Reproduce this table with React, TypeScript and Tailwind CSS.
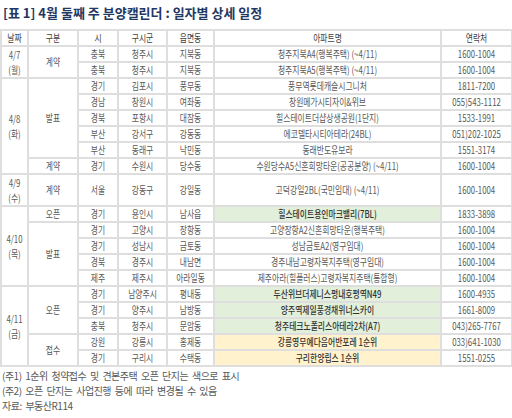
import React from "react";

type Row = {
  date?: [string, string, number];
  cat?: [string, number];
  si: string;
  gu: string;
  dong: string;
  apt: string;
  tel: string;
  hl?: "g" | "y";
  tall?: boolean;
};

const rows: Row[] = [
  { date: ["4/7", "(월)", 2], cat: ["계약", 2], si: "충북", gu: "청주시", dong: "지북동", apt: "청주지북A4(행복주택) (~4/11)", tel: "1600-1004" },
  { si: "충북", gu: "청주시", dong: "지북동", apt: "청주지북A5(행복주택) (~4/11)", tel: "1600-1004" },
  { date: ["4/8", "(화)", 6], cat: ["발표", 5], si: "경기", gu: "김포시", dong: "풍무동", apt: "풍무역롯데캐슬시그니처", tel: "1811-7200" },
  { si: "경남", gu: "창원시", dong: "여좌동", apt: "창원메가시티자이&위브", tel: "055)543-1112" },
  { si: "경북", gu: "포항시", dong: "대잠동", apt: "힐스테이트더샵상생공원(1단지)", tel: "1533-1991" },
  { si: "부산", gu: "강서구", dong: "강동동", apt: "에코델타시티아테라(24BL)", tel: "051)202-1025" },
  { si: "부산", gu: "동래구", dong: "낙민동", apt: "동래반도유보라", tel: "1551-3174" },
  { cat: ["계약", 1], si: "경기", gu: "수원시", dong: "당수동", apt: "수원당수A5신혼희망타운(공공분양) (~4/11)", tel: "1600-1004" },
  { date: ["4/9", "(수)", 1], cat: ["계약", 1], si: "서울", gu: "강동구", dong: "강일동", apt: "고덕강일2BL(국민임대) (~4/11)", tel: "1600-1004", tall: true },
  { date: ["4/10", "(목)", 5], cat: ["오픈", 1], si: "경기", gu: "용인시", dong: "남사읍", apt: "힐스테이트용인마크밸리(7BL)", tel: "1833-3898", hl: "g" },
  { cat: ["발표", 4], si: "경기", gu: "고양시", dong: "장항동", apt: "고양장항A2신혼희망타운(행복주택)", tel: "1600-1004" },
  { si: "경기", gu: "성남시", dong: "금토동", apt: "성남금토A2(영구임대)", tel: "1600-1004" },
  { si: "경북", gu: "경주시", dong: "내남면", apt: "경주내남고령자복지주택(영구임대)", tel: "1600-1004" },
  { si: "제주", gu: "제주시", dong: "아라일동", apt: "제주아라(힐플러스)고령자복지주택(통합형)", tel: "1600-1004" },
  { date: ["4/11", "(금)", 5], cat: ["오픈", 3], si: "경기", gu: "남양주시", dong: "평내동", apt: "두산위브더제니스평내호평역N49", tel: "1600-4935", hl: "g" },
  { si: "경기", gu: "양주시", dong: "남방동", apt: "양주역제일풍경채위너스카이", tel: "1661-8009", hl: "g" },
  { si: "충북", gu: "청주시", dong: "문암동", apt: "청주테크노폴리스아테라2차(A7)", tel: "043)265-7767", hl: "g" },
  { cat: ["접수", 2], si: "강원", gu: "강릉시", dong: "홍제동", apt: "강릉영무예다음어반포레 1순위", tel: "033)641-1030", hl: "y" },
  { si: "경기", gu: "구리시", dong: "수택동", apt: "구리한양립스 1순위", tel: "1551-0255", hl: "y" },
];

const td = "p-0 border-2 border-[#dedede] text-center align-middle";

function T({ children, bold }: { children: React.ReactNode; bold?: boolean }) {
  return (
    <span
      className={
        "block scale-x-[0.78] whitespace-nowrap leading-[12px] " +
        (bold ? "font-medium text-[#333333]" : "")
      }
    >
      {children}
    </span>
  );
}

export default function App() {
  return (
    <div className="w-[512px] h-[418px] bg-white font-['Noto_Sans_CJK_KR',sans-serif] overflow-hidden">
      <div className="h-[26px] pl-[3px] text-[13px] leading-[26px] font-bold text-[#1f3864] whitespace-nowrap">
        [표 1] 4월 둘째 주 분양캘린더 : 일자별 상세 일정
      </div>
      <table className="mt-[3px] w-[511px] table-fixed border-collapse text-[10px] leading-[12px] text-[#595959]">
        <colgroup>
          <col className="w-[27px]" />
          <col className="w-[50px]" />
          <col className="w-[40px]" />
          <col className="w-[49px]" />
          <col className="w-[47px]" />
          <col className="w-[227px]" />
          <col className="w-[71px]" />
        </colgroup>
        <thead>
          <tr className="h-[16px] text-[#404040]">
            <th className={td + " font-normal"}><T>날짜</T></th>
            <th className={td + " font-normal"}><T>구분</T></th>
            <th className={td + " font-normal"}><T>시</T></th>
            <th className={td + " font-normal"}><T>구시군</T></th>
            <th className={td + " font-normal"}><T>읍면동</T></th>
            <th className={td + " font-normal"}><T>아파트명</T></th>
            <th className={td + " font-normal"}><T>연락처</T></th>
          </tr>
        </thead>
        <tbody>
          {rows.map((r, i) => (
            <tr key={i} className={r.tall ? "h-[32px]" : "h-[16px]"}>
              {r.date && (
                <td rowSpan={r.date[2]} className={td}>
                  <span className="block scale-x-[0.78] whitespace-nowrap leading-[15px]">
                    {r.date[0]}
                    <br />
                    {r.date[1]}
                  </span>
                </td>
              )}
              {r.cat && (
                <td rowSpan={r.cat[1]} className={td}>
                  <T>{r.cat[0]}</T>
                </td>
              )}
              <td className={td}><T>{r.si}</T></td>
              <td className={td}><T>{r.gu}</T></td>
              <td className={td}><T>{r.dong}</T></td>
              <td
                className={
                  td +
                  (r.hl === "g" ? " bg-[#e2efda]" : r.hl === "y" ? " bg-[#fff2cc]" : "")
                }
              >
                <T bold={!!r.hl}>{r.apt}</T>
              </td>
              <td className={td}><T>{r.tel}</T></td>
            </tr>
          ))}
        </tbody>
      </table>
      <div className="mt-[1px] pl-[2px] text-[10px] leading-[15px] text-[#595959] tracking-[-0.5px] [word-spacing:2px]">
        <div>(주1) 1순위 청약접수 및 견본주택 오픈 단지는 색으로 표시</div>
        <div>(주2) 오픈 단지는 사업진행 등에 따라 변경될 수 있음</div>
        <div>자료: 부동산R114</div>
      </div>
    </div>
  );
}
